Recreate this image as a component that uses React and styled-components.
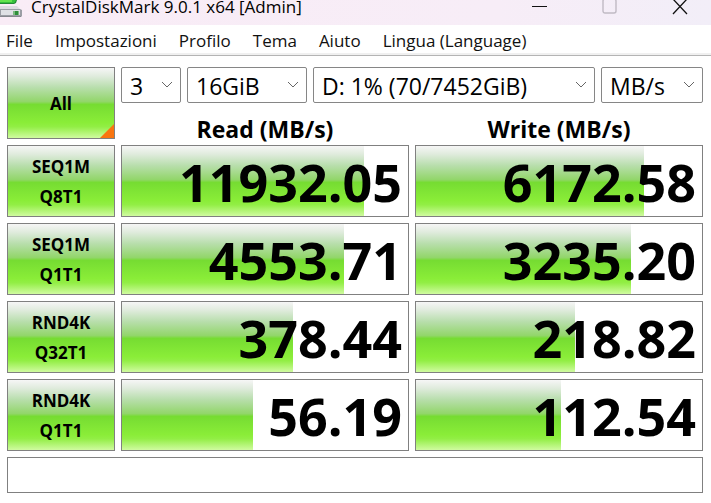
import React, { useState } from 'react';
import styled, { createGlobalStyle } from 'styled-components';

const GlobalStyle = createGlobalStyle`
    *, *::before, *::after {
        box-sizing: border-box;
    }

    body {
        margin: 0;
        background: #fff;
        color: #000;
        font-family: "Open Sans", "Noto Sans", sans-serif;
    }

    button, select, input {
        font-family: inherit;
        color: inherit;
    }
`;

const gloss = `linear-gradient(
    to bottom,
    #f6f6f6 0%,
    #dfebdc 12%,
    #b8deac 28%,
    #92d66a 48%,
    #76dc32 52%,
    #8aed38 78%,
    #92ee45 84%,
    #d0fba0 100%
)`;

const Window = styled.div`
    display: flex;
    flex-direction: column;
    overflow: hidden;
`;

const TitleBar = styled.header`
    display: flex;
    align-items: flex-start;
    height: 25px;
    background: linear-gradient(to right, #f9ecf6, #f7edf7 70%, #f2eef8);
`;

const Title = styled.h1`
    flex: 1;
    margin: 0 0 0 9px;
    font-size: 17px;
    font-weight: 400;
    line-height: 14px;
    white-space: nowrap;
`;

const WindowButtons = styled.div`
    display: flex;
    gap: 8px;
`;

const WindowButton = styled.button`
    display: flex;
    justify-content: center;
    width: 62px;
    height: 25px;
    padding: 0;
    border: 0;
    background: none;
`;

const Menu = styled.nav`
    display: flex;
    gap: 22px;
    height: 31px;
    padding: 0 6px;
    border-bottom: 1px solid #b4b4b4;
    box-shadow: inset 0 -2px #f0f0f0;
`;

const MenuLink = styled.a`
    color: #111;
    font-size: 17px;
    line-height: 32px;
    text-decoration: none;
    white-space: nowrap;
`;

const Main = styled.main`
    display: grid;
    grid-template-columns: 108px 1fr 1fr;
    gap: 6px;
    padding: 11px 8px 10px 7px;
`;

const TestButton = styled.button`
    position: relative;
    height: 72px;
    padding: 2px 0 0;
    border: 1px solid #808080;
    background: ${gloss};
    font-size: 17px;
    font-weight: 700;
    line-height: 30px;
    white-space: pre-line;
`;

const Corner = styled.span`
    position: absolute;
    right: 0;
    bottom: 0;
    width: 14px;
    height: 14px;
    background: #f97510;
    clip-path: polygon(100% 0, 100% 100%, 0 100%);
`;

const Settings = styled.div`
    grid-column: span 2;
    display: grid;
    grid-template-columns: 1fr 1fr;
    column-gap: 6px;
`;

const Selects = styled.div`
    grid-column: span 2;
    display: flex;
    gap: 6px;
`;

const SelectBox = styled.div`
    display: grid;
    flex: ${({ $width }) => ($width ? `0 0 ${$width}px` : '1')};
    align-items: center;

    > * {
        grid-area: 1 / 1;
    }

    svg {
        justify-self: end;
        margin-right: 8px;
        pointer-events: none;
    }
`;

const Select = styled.select`
    appearance: none;
    width: 100%;
    height: 36px;
    padding: 2px 0 0 8px;
    border: 1px solid #868686;
    border-radius: 2px;
    background: #fff;
    font-size: 23px;
`;

const Heading = styled.h2`
    height: 36px;
    margin: 0;
    padding-top: 8px;
    font-size: 23px;
    font-weight: 700;
    line-height: 36px;
    text-align: center;
`;

const Meter = styled.div`
    display: grid;
    height: 72px;
    border: 1px solid #808080;
    background: #fff;

    > * {
        grid-area: 1 / 1;
    }
`;

const Fill = styled.div`
    background: ${gloss};
`;

const Value = styled.output`
    padding: 2px 6px 0 0;
    font-size: 52px;
    font-weight: 700;
    line-height: 68px;
    text-align: right;
    z-index: 1;
`;

const Comment = styled.input`
    grid-column: 1 / -1;
    height: 36px;
    padding: 0 8px;
    border: 1px solid #808080;
    background: #fff;
    font-size: 17px;
`;

const menu = ['File', 'Impostazioni', 'Profilo', 'Tema', 'Aiuto', 'Lingua (Language)'];

const settings = [
    { id: 'count', label: 'Count', width: 60, options: ['3', '1', '5', '9'] },
    { id: 'size', label: 'Size', width: 120, options: ['16GiB', '1GiB', '32GiB', '64GiB'] },
    { id: 'drive', label: 'Drive', options: ['D: 1% (70/7452GiB)'] },
    { id: 'unit', label: 'Unit', width: 102, options: ['MB/s', 'GB/s', 'IOPS', 'μs'] },
];

const tests = [
    { name: 'SEQ1M', queue: 'Q8T1', read: 11932.05, write: 6172.58 },
    { name: 'SEQ1M', queue: 'Q1T1', read: 4553.71, write: 3235.2 },
    { name: 'RND4K', queue: 'Q32T1', read: 378.44, write: 218.82 },
    { name: 'RND4K', queue: 'Q1T1', read: 56.19, write: 112.54 },
];

// Logarithmic scale, 0.1 MB/s is empty and 100000 MB/s is full
const percent = (score) => Math.max(0, Math.min(100, (Math.log10(score * 10) / 6) * 100));

const DriveIcon = () => (
    <svg width="22" height="19" viewBox="0 0 22 19" aria-hidden="true">
        <path d="M0 0h17l-1 3-2 1H0z" fill="#238a35" />
        <path d="M0 0h16l-1 2-1 1H0z" fill="#35c03c" />
        <path d="M0 0h12v2H0z" fill="#63e34f" />
        <path d="M0 6h17l4 4H0z" fill="#dcdce1" />
        <path d="M0 9h20l2 1v6l-1 1H0z" fill="#9b9ea5" />
        <path d="M1 10h19v5H1z" fill="#dfe1e5" />
        <path d="M13 11h6v4h-6z" fill="#7dbb80" />
        <path d="M15 11h3v4h-3z" fill="#2f8e3b" />
        <path d="M0 16h21v1H0z" fill="#85888e" />
    </svg>
);

const Chevron = () => (
    <svg width="12" height="8" viewBox="0 0 12 8" aria-hidden="true">
        <path d="M1 1l5 5 5-5" fill="none" stroke="#666" />
    </svg>
);

const Result = ({ label, score }) => (
    <Meter>
        <Fill style={{ width: `${percent(score)}%` }} />
        <Value aria-label={label}>{score.toFixed(2)}</Value>
    </Meter>
);

export default function App() {
    const [comment, setComment] = useState('');

    return (
        <Window>
            <GlobalStyle />
            <TitleBar>
                <DriveIcon />
                <Title>CrystalDiskMark 9.0.1 x64 [Admin]</Title>
                <WindowButtons>
                    <WindowButton aria-label="Minimize">
                        <svg width="16" height="15" viewBox="0 0 16 15">
                            <path d="M0 6.5h15" stroke="#111" />
                        </svg>
                    </WindowButton>
                    <WindowButton aria-label="Maximize" disabled>
                        <svg width="16" height="15" viewBox="0 0 16 15">
                            <rect x="1" y="-1" width="13" height="14" rx="2" fill="none" stroke="#c0bac4" strokeWidth="1.4" />
                        </svg>
                    </WindowButton>
                    <WindowButton aria-label="Close">
                        <svg width="16" height="15" viewBox="0 0 16 15">
                            <path d="M1-1l14 15M15-1L1 14" stroke="#111" strokeWidth="1.3" />
                        </svg>
                    </WindowButton>
                </WindowButtons>
            </TitleBar>
            <Menu>
                {menu.map(item => <MenuLink key={item} href="#">{item}</MenuLink>)}
            </Menu>
            <Main>
                <TestButton>
                    All
                    <Corner />
                </TestButton>
                <Settings>
                    <Selects>
                        {settings.map(({ id, label, width, options }) => (
                            <SelectBox key={id} $width={width}>
                                <Select id={id} aria-label={label}>
                                    {options.map(option => <option key={option}>{option}</option>)}
                                </Select>
                                <Chevron />
                            </SelectBox>
                        ))}
                    </Selects>
                    <Heading>Read (MB/s)</Heading>
                    <Heading>Write (MB/s)</Heading>
                </Settings>
                {tests.map(({ name, queue, read, write }) => (
                    <React.Fragment key={name + queue}>
                        <TestButton>{`${name}\n${queue}`}</TestButton>
                        <Result label={`${name} ${queue} read`} score={read} />
                        <Result label={`${name} ${queue} write`} score={write} />
                    </React.Fragment>
                ))}
                <Comment
                    aria-label="Comment"
                    value={comment}
                    onChange={e => setComment(e.target.value)}
                />
            </Main>
        </Window>
    );
}
